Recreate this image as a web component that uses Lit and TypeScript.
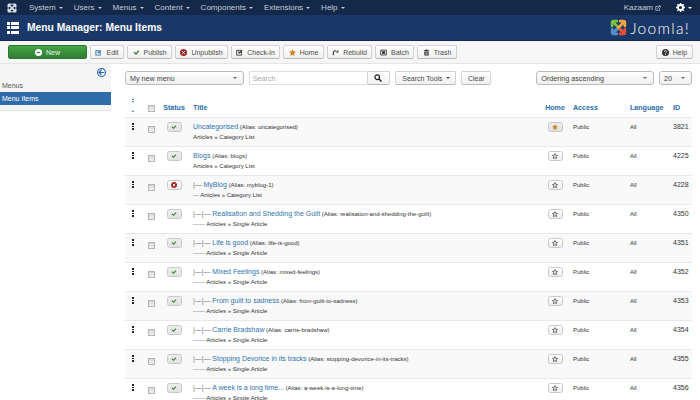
import { LitElement, html, css, svg } from "lit";
import { customElement } from "lit/decorators.js";

const ic = (body: unknown, size = 7, box = 16) =>
  html`<svg class="ic" width=${size} height=${size} viewBox="0 0 ${box} ${box}">${body}</svg>`;

const icons: Record<string, () => unknown> = {
  plus: () =>
    ic(svg`<circle cx="8" cy="8" r="8" fill="#fff"/><rect x="4" y="6.6" width="8" height="2.8" fill="#3b8a3e"/>`),
  edit: () =>
    ic(svg`<path d="M1 3h9v2H3v8h8V8h2v7H1z" fill="#2f6fa8"/><path d="M6 8l6-6 2.500 2.500-6 6H6z" fill="#2f6fa8"/>`),
  check: () => ic(svg`<path d="M1.500 8.500l2.400-2.400L7 9l5-6 2.500 2.400L7 13.500z" fill="#378137"/>`),
  unpublish: () =>
    ic(svg`<circle cx="8" cy="8" r="8" fill="#a5282a"/><path d="M5 5l6 6M11 5l-6 6" stroke="#fff" stroke-width="2.200"/>`),
  checkin: () =>
    ic(svg`<path d="M1.500 3h11v11h-11z" fill="none" stroke="#333" stroke-width="2"/><path d="M4 7l2-2 2 2 5-5 2 2-7 7z" fill="#333"/>`),
  star: () =>
    ic(svg`<path d="M8 0l2.400 5.400 5.600.6-4.200 3.800L13 16l-5-3-5 3 1.200-6.200L0 6l5.600-.6z" fill="#d2842a"/>`),
  rebuild: () =>
    ic(svg`<path d="M3 14V8a4.500 4.500 0 0 1 7-3" fill="none" stroke="#333" stroke-width="2.400"/><path d="M8.500 8l6 0 0-6z" fill="#333"/>`),
  batch: () =>
    ic(svg`<path d="M1.500 2.500h13v11h-13z" fill="none" stroke="#333" stroke-width="2"/><rect x="4.500" y="5" width="7" height="6" fill="#333"/>`),
  trash: () =>
    ic(svg`<path d="M2 3h12v2H2zM6 1h4v2H6zM3 6h10v9H3z" fill="#333"/><path d="M6 7.500v6M8 7.500v6M10 7.500v6" stroke="#f4f4f4"/>`),
  help: () =>
    ic(svg`<circle cx="8" cy="8" r="8" fill="#333"/><path d="M5.500 6.300a2.500 2.500 0 1 1 3.600 2.200c-.8.4-1.100.8-1.100 1.700" fill="none" stroke="#fff" stroke-width="1.800"/><rect x="7" y="11.200" width="2" height="2" fill="#fff"/>`),
  search: () =>
    ic(svg`<circle cx="6.500" cy="6.500" r="4.600" fill="none" stroke="#222" stroke-width="2.400"/><path d="M10 10l5 5" stroke="#222" stroke-width="3"/>`, 8),
  starOpen: () =>
    ic(svg`<path d="M8 1.500l2 4.600 4.800.5-3.600 3.200 1 5L8 12.600l-4.200 2.200 1-5L1.200 6.600l4.800-.5z" fill="none" stroke="#333" stroke-width="1.800"/>`),
  gear: () =>
    ic(svg`<circle cx="8" cy="8" r="4.500" fill="none" stroke="#fff" stroke-width="3.400"/><path d="M8 0v16M0 8h16M2.300 2.300l11.400 11.400M13.700 2.300L2.300 13.700" stroke="#fff" stroke-width="2.400" stroke-dasharray="2.600 10.800"/>`, 9),
  external: () =>
    ic(svg`<path d="M2 4h6M2 4v10h10V9" fill="none" stroke="#c4ccd8" stroke-width="2"/><path d="M6 10l7-7M9 2h5v5" fill="none" stroke="#c4ccd8" stroke-width="2"/>`, 6),
};

// four hooked arms crossing in the middle
const joomlaMark = (size: number, c: string[]) => html`<svg class="ic" width=${size} height=${size} viewBox="0 0 32 32">
  <g fill="none" stroke-width="5" stroke-linecap="round" stroke-linejoin="round">
    <path d="M4 13V6.500Q4 4 6.500 4H13M7 7L22 22" stroke=${c[0]} />
    <path d="M28 13V6.500Q28 4 25.500 4H19M25 7L10 22" stroke=${c[1]} />
    <path d="M4 19v6.500Q4 28 6.500 28H13M7 25L13 19" stroke=${c[2]} />
    <path d="M28 19v6.500Q28 28 25.500 28H19M25 25L19 19" stroke=${c[3]} />
  </g>
</svg>`;

const menus = ["System", "Users", "Menus", "Content", "Components", "Extensions", "Help"];

const tools = [
  { label: "Edit", icon: "edit", w: 34 },
  { label: "Publish", icon: "check", w: 45 },
  { label: "Unpublish", icon: "unpublish", w: 53 },
  { label: "Check-in", icon: "checkin", w: 49 },
  { label: "Home", icon: "star", w: 41 },
  { label: "Rebuild", icon: "rebuild", w: 45 },
  { label: "Batch", icon: "batch", w: 39 },
  { label: "Trash", icon: "trash", w: 40 },
];

const items = [
  { title: "Uncategorised", alias: "uncategorised", type: "Category List", level: 1, id: 3821, home: true },
  { title: "Blogs", alias: "blogs", type: "Category List", level: 1, id: 4225 },
  { title: "MyBlog", alias: "myblog-1", type: "Category List", level: 2, id: 4228, off: true },
  { title: "Realisation and Shedding the Guilt", alias: "realisation-and-shedding-the-guilt", type: "Single Article", level: 3, id: 4350 },
  { title: "Life is good", alias: "life-is-good", type: "Single Article", level: 3, id: 4351 },
  { title: "Mixed Feelings", alias: "mixed-feelings", type: "Single Article", level: 3, id: 4352 },
  { title: "From guilt to sadness", alias: "from-guilt-to-sadness", type: "Single Article", level: 3, id: 4353 },
  { title: "Carrie Bradshaw", alias: "carrie-bradshaw", type: "Single Article", level: 3, id: 4354 },
  { title: "Stopping Devorice in its tracks", alias: "stopping-devorice-in-its-tracks", type: "Single Article", level: 3, id: 4355 },
  { title: "A week is a long time...", alias: "a-week-is-a-long-time", type: "Single Article", level: 3, id: 4356 },
];

const treePrefix = ["", "|—", "|—|—"];
const metaPrefix = ["", "—", "——"];

@customElement("app-root")
export class AppRoot extends LitElement {
  static styles = css`
    :host {
      display: block;
      width: 700px;
      height: 400px;
      overflow: hidden;
      background: #fff;
      font-family: "Liberation Sans", Arial, sans-serif;
      font-size: 7px;
      color: #333;
    }
    .ic {
      display: block;
      flex: none;
    }

    nav {
      height: 15px;
      display: flex;
      align-items: center;
      background: #13294a;
      color: #c4ccd8;
      font-size: 8px;
    }
    .brand {
      width: 29px;
      padding-left: 7px;
      box-sizing: border-box;
    }
    .menus {
      display: flex;
      gap: 11px;
    }
    .menu {
      display: flex;
      align-items: center;
      gap: 3px;
    }
    .caret {
      width: 0;
      height: 0;
      border-left: 2px solid transparent;
      border-right: 2px solid transparent;
      border-top: 2px solid currentColor;
    }
    .user {
      margin-left: auto;
      display: flex;
      align-items: center;
      gap: 2px;
      padding-right: 8px;
    }
    .gear {
      display: flex;
      align-items: center;
      gap: 3px;
      margin-left: 13px;
      color: #fff;
    }

    header {
      height: 25px;
      display: flex;
      align-items: center;
      background: #1a3867;
      border-bottom: 1px solid #102a50;
      color: #fff;
      padding: 0 10px 0 7px;
    }
    .burger {
      width: 12px;
      display: grid;
      grid-template-columns: 3px 8px;
      gap: 1.500px 1px;
      margin-right: 8px;
    }
    .burger i {
      height: 3px;
      background: #fff;
    }
    h1 {
      margin: 0;
      font-size: 10.300px;
      font-weight: 700;
    }
    .logo {
      margin-left: auto;
      display: flex;
      align-items: center;
      gap: 3px;
      font-family: Lato, sans-serif;
      font-weight: 300;
      font-size: 15.500px;
      letter-spacing: 1.300px;
    }

    .toolbar {
      height: 23px;
      box-sizing: border-box;
      display: flex;
      align-items: center;
      gap: 3px;
      padding: 0 7px 0 8px;
      background: #f6f6f6;
      border-bottom: 1px solid #e4e4e4;
    }
    .btn {
      height: 14px;
      box-sizing: border-box;
      display: flex;
      align-items: center;
      justify-content: center;
      gap: 4px;
      padding: 0;
      font-size: 7px;
      color: #4a4a4a;
      background: linear-gradient(#fff, #f0f0f0);
      border: 1px solid #d2d2d2;
      border-bottom-color: #b8b8b8;
      border-radius: 2px;
      white-space: nowrap;
    }
    .new {
      width: 79px;
      color: #e8f3e8;
      background: linear-gradient(#46a546, #2f7d32);
      border-color: #2c772f;
    }
    .help {
      width: 37px;
      margin-left: auto;
    }

    .body {
      display: flex;
    }
    aside {
      width: 111px;
      height: 47px;
      flex: none;
      background: #f5f5f5;
      border-bottom: 1px solid #e6e6e6;
      box-sizing: border-box;
      display: flex;
      flex-direction: column;
      color: #555;
    }
    .collapse {
      align-self: flex-end;
      margin: 4px 5px 0 0;
    }
    .side-link {
      padding-left: 2px;
      height: 13px;
      line-height: 13px;
      font-size: 7px;
    }
    .side-first {
      margin-top: 2px;
    }
    .side-active {
      background: #2d6ca8;
      color: #fff;
    }

    main {
      width: 567px;
      margin-left: 14px;
    }
    .filters {
      display: flex;
      align-items: center;
      height: 14px;
      margin-top: 7px;
      margin-bottom: 7px;
      font-size: 7.200px;
    }
    .select {
      height: 14px;
      box-sizing: border-box;
      display: flex;
      align-items: center;
      justify-content: space-between;
      padding: 0 6px 0 4px;
      border: 1px solid #bbb;
      border-radius: 3px;
      background: linear-gradient(#fff, #eee);
      color: #444;
    }
    .select .caret {
      color: #666;
    }
    .menu-select {
      width: 119px;
      margin-right: 5px;
    }
    .search {
      width: 118px;
      height: 14px;
      box-sizing: border-box;
      padding-left: 3px;
      display: flex;
      align-items: center;
      color: #aaa;
      border: 1px solid #ddd;
      border-right: 0;
      border-radius: 2px 0 0 2px;
    }
    .search-btn {
      width: 24px;
      margin-right: 5px;
    }
    .tools-btn {
      width: 61px;
      margin-right: 5px;
      gap: 3px;
    }
    .clear {
      width: 30px;
      margin-right: 45px;
    }
    .order {
      width: 118px;
      margin-right: 5px;
    }
    .limit {
      width: 33px;
    }

    .row {
      display: grid;
      grid-template-columns: 16px 20px 26px 358px 20px 65px 43px 19px;
      height: 29px;
      box-sizing: border-box;
      border-top: 1px solid #e8e8e8;
    }
    .row:nth-child(even) {
      background: #f9f9f9;
    }
    .head {
      height: 25px;
      border-top: 0;
      background: none;
      align-items: end;
      color: #2b6da8;
      font-weight: 700;
      font-size: 7.100px;
      padding-bottom: 5px;
      white-space: nowrap;
    }
    .sort {
      display: flex;
      flex-direction: column;
      align-items: center;
      gap: 1px;
      color: #2b6da8;
    }
    .sort i {
      display: block;
      width: 0;
      border-left: 1.500px solid transparent;
      border-right: 1.500px solid transparent;
      border-bottom: 2px solid currentColor;
    }
    .sort i.down {
      border-bottom: 0;
      border-top: 2px solid currentColor;
      margin-bottom: 6px;
    }
    .center {
      display: flex;
      justify-content: center;
    }
    .drag {
      display: flex;
      flex-direction: column;
      align-items: center;
      gap: 1px;
      padding-top: 5px;
    }
    .drag i {
      width: 2px;
      height: 1.600px;
      background: #222;
    }
    .box {
      width: 7px;
      height: 7px;
      box-sizing: border-box;
      border: 1px solid #b5b5b5;
      background: linear-gradient(#d8d8d8, #f0f0f0);
      margin-top: 8px;
    }
    .head .box {
      margin-top: 0;
    }
    .state {
      width: 15px;
      height: 10px;
      margin-top: 4px;
      gap: 0;
      background: linear-gradient(#eee, #e2e2e2);
      border-color: #c8c8c8;
      border-radius: 2.500px;
    }
    .state .ic {
      width: 6px;
      height: 6px;
    }
    .state-light {
      background: linear-gradient(#fff, #eee);
    }
    .title-cell {
      padding: 3px 0 0 6px;
      font-size: 6px;
      white-space: nowrap;
      overflow: hidden;
    }
    .title-line {
      height: 11px;
      line-height: 11px;
    }
    .title-line a {
      font-size: 7px;
      color: #2f74ae;
    }
    .tree {
      font-size: 7px;
      color: #777;
    }
    .meta {
      margin-top: 1px;
      line-height: 9px;
    }
    .meta span {
      color: #777;
    }
    .head-title {
      padding-left: 6px;
    }
    .head-access {
      padding-left: 8px;
    }
    .small {
      font-size: 6px;
      padding: 6px 0 0 8px;
    }
    .lang {
      padding-left: 0;
    }
    .id {
      font-size: 7px;
      padding-top: 5px;
    }
  `;

  render() {
    return html`
      <nav>
        <div class="brand">${joomlaMark(10, ["#d8dde5", "#d8dde5", "#d8dde5", "#d8dde5"])}</div>
        <div class="menus">
          ${menus.map((m) => html`<div class="menu">${m}<span class="caret"></span></div>`)}
        </div>
        <div class="user">Kazaam ${icons.external()}
          <div class="gear">${icons.gear()}<span class="caret"></span></div>
        </div>
      </nav>
      <header>
        <div class="burger">
          ${[0, 1, 2].map(() => html`<i></i><i></i>`)}
        </div>
        <h1>Menu Manager: Menu Items</h1>
        <div class="logo">${joomlaMark(17, ["#7ac143", "#f9a541", "#5091cd", "#ef4d3b"])}<span>Joomla!</span></div>
      </header>
      <div class="toolbar">
        <div class="btn new">${icons.plus()}New</div>
        ${tools.map((t) => html`<div class="btn" style="width:${t.w}px">${icons[t.icon]()}${t.label}</div>`)}
        <div class="btn help">${icons.help()}Help</div>
      </div>
      <div class="body">
        <aside>
          <div class="collapse">
            <svg class="ic" width="9" height="9" viewBox="0 0 16 16">
              <circle cx="8" cy="8" r="7" fill="#fff" stroke="#2d6ca8" stroke-width="2" />
              <path d="M8 3.500L3.500 8 8 12.500M4 8h9" fill="none" stroke="#2d6ca8" stroke-width="2.200" />
            </svg>
          </div>
          <div class="side-link side-first">Menus</div>
          <div class="side-link side-active">Menu Items</div>
        </aside>
        <main>
          <div class="filters">
            <div class="select menu-select">My new menu<span class="caret"></span></div>
            <div class="search">Search</div>
            <div class="btn search-btn">${icons.search()}</div>
            <div class="btn tools-btn">Search Tools<span class="caret"></span></div>
            <div class="btn clear">Clear</div>
            <div class="select order">Ordering ascending<span class="caret"></span></div>
            <div class="select limit">20<span class="caret"></span></div>
          </div>
          <div class="table">
            <div class="row head">
              <div class="sort"><i></i><i class="down"></i><i></i></div>
              <div class="center"><div class="box"></div></div>
              <div class="center">Status</div>
              <div class="head-title">Title</div>
              <div class="center">Home</div>
              <div class="head-access">Access</div>
              <div>Language</div>
              <div>ID</div>
            </div>
            ${items.map(
              (r) => html`
                <div class="row">
                  <div class="drag"><i></i><i></i><i></i></div>
                  <div class="center"><div class="box"></div></div>
                  <div class="center"><div class="btn state ${r.off ? "state-light" : ""}">${r.off ? icons.unpublish() : icons.check()}</div></div>
                  <div class="title-cell">
                    <div class="title-line">
                      ${r.level > 1 ? html`<span class="tree">${treePrefix[r.level - 1]}</span>` : ""}
                      <a>${r.title}</a> (Alias: ${r.alias})
                    </div>
                    <div class="meta">
                      ${r.level > 1 ? html`<span>${metaPrefix[r.level - 1]}</span>` : ""} Articles » ${r.type}
                    </div>
                  </div>
                  <div class="center">
                    <div class="btn state ${r.home ? "" : "state-light"}">${r.home ? icons.star() : icons.starOpen()}</div>
                  </div>
                  <div class="small">Public</div>
                  <div class="small lang">All</div>
                  <div class="id">${r.id}</div>
                </div>
              `
            )}
          </div>
        </main>
      </div>
    `;
  }
}
